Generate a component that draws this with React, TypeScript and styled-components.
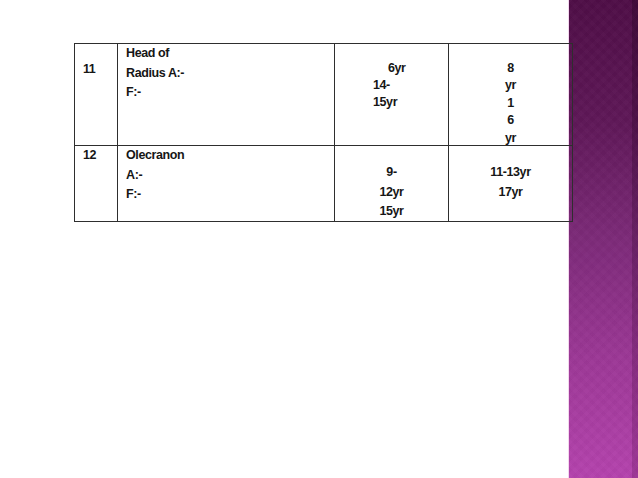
import React from 'react';
import styled, { createGlobalStyle } from 'styled-components';

const GlobalStyle = createGlobalStyle`
  html, body {
    margin: 0;
    padding: 0;
    background: #ffffff;
  }
  #root {
    width: 638px;
    height: 478px;
  }
`;

const Slide = styled.div`
  display: flex;
  width: 638px;
  height: 478px;
  overflow: hidden;
  background: #ffffff;
  font-family: "Liberation Sans", Arial, sans-serif;
`;

const Main = styled.div`
  position: relative;
  z-index: 1;
  flex: 0 0 568px;
  min-width: 0;
  padding: 43px 0 0 74px;
  box-sizing: border-box;
`;

const Sidebar = styled.div`
  flex: 1;
  display: flex;
  border-left: 1px solid #f3d6ef;
  background:
    repeating-linear-gradient(45deg, rgba(255, 255, 255, 0.012) 0 4px, rgba(0, 0, 0, 0.012) 4px 8px),
    repeating-linear-gradient(-45deg, rgba(255, 255, 255, 0.012) 0 4px, rgba(0, 0, 0, 0.012) 4px 8px),
    linear-gradient(180deg, #4f0e47 0%, #5e1757 25%, #7c2a78 50%, #9c3896 75%, #b443ad 100%);
`;

const SidebarEdge = styled.div`
  margin-left: auto;
  width: 6px;
  background: linear-gradient(180deg, rgba(30, 0, 25, 0.3) 0%, rgba(60, 0, 50, 0.18) 100%);
`;

const Table = styled.div`
  display: grid;
  grid-template-columns: 43px 217px 114px 124px;
  grid-template-rows: 102px 76px;
  width: 499px;
  border-left: 1px solid #2e2e2e;
  border-top: 1px solid #2e2e2e;
  box-sizing: border-box;
`;

const Cell = styled.div<{ $top?: number; $left?: number; $lh?: number; $center?: boolean }>`
  box-sizing: border-box;
  border-right: 1px solid #2e2e2e;
  border-bottom: 1px solid #2e2e2e;
  padding: ${(p) => p.$top ?? 0}px 0 0 ${(p) => p.$left ?? 0}px;
  text-align: ${(p) => (p.$center ? 'center' : 'left')};
  font-size: 12.5px;
  font-weight: 700;
  letter-spacing: -0.4px;
  line-height: ${(p) => p.$lh ?? 19.5}px;
  color: #161616;
`;

const Line = styled.div<{ $indent?: number }>`
  white-space: nowrap;
  padding-left: ${(p) => p.$indent ?? 0}px;
`;

export default function App() {
  return (
    <>
      <GlobalStyle />
      <Slide>
        <Main>
          <Table>
            <Cell $top={16} $left={8}>11</Cell>
            <Cell $left={8}>
              <Line>Head of</Line>
              <Line>Radius A:-</Line>
              <Line>F:-</Line>
            </Cell>
            <Cell $top={16} $left={38} $lh={17}>
              <Line $indent={15}>6yr</Line>
              <Line>14-</Line>
              <Line>15yr</Line>
            </Cell>
            <Cell $top={16} $lh={17.4} $center>
              <Line>8</Line>
              <Line>yr</Line>
              <Line>1</Line>
              <Line>6</Line>
              <Line>yr</Line>
            </Cell>

            <Cell $left={8}>12</Cell>
            <Cell $left={8}>
              <Line>Olecranon</Line>
              <Line>A:-</Line>
              <Line>F:-</Line>
            </Cell>
            <Cell $top={17} $center>
              <Line>9-</Line>
              <Line>12yr</Line>
              <Line>15yr</Line>
            </Cell>
            <Cell $top={17} $center>
              <Line>11-13yr</Line>
              <Line>17yr</Line>
            </Cell>
          </Table>
        </Main>
        <Sidebar>
          <SidebarEdge />
        </Sidebar>
      </Slide>
    </>
  );
}
